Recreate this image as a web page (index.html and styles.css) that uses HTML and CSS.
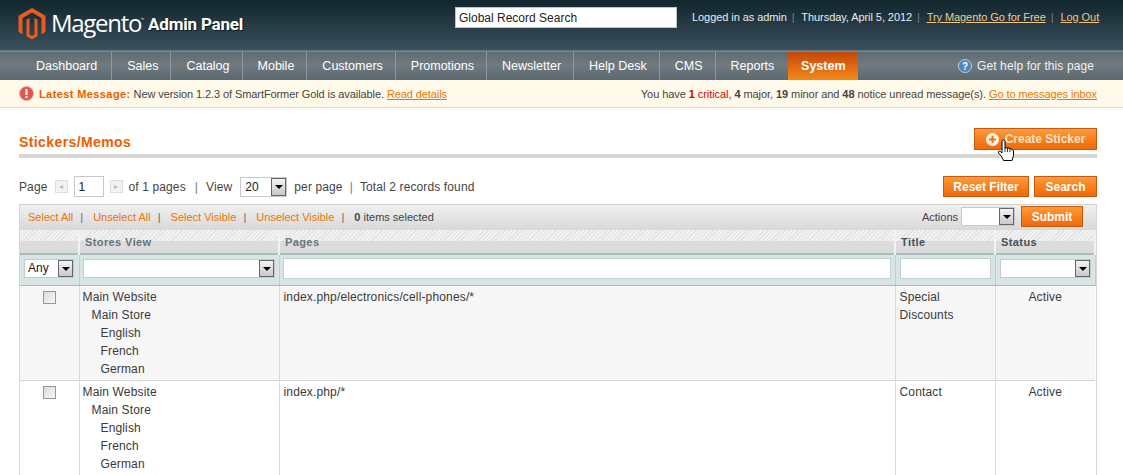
FILE: index.html
```html
<!DOCTYPE html>
<html lang="en">

<head>
    <meta charset="UTF-8">
    <meta name="viewport" content="width=device-width, initial-scale=1.0">
    <title>Stickers/Memos</title>
    <link rel="stylesheet" href="styles.css">
</head>

<body>
    <div class="header">
        <div class="logo">
            <svg class="logo-icon" width="28" height="32" viewBox="0 0 28 32">
                <path fill="#ea5b1d" d="M14 0 27.5 7.8V24L23.5 26.3V10.1L14 4.6 4.5 10.1V26.3L.5 24V7.8Z"/>
                <path fill="#ea5b1d" d="M14 8.5 19.5 11.7V28.2L14 31.5 8.500 28.200V11.700L11.500 10V26.500L14 28 16.500 26.500V10Z"/>
            </svg>
            <span class="logo-name">Magento<sup>™</sup></span>
            <span class="logo-sub">Admin Panel</span>
        </div>
        <input class="global-search" type="text" value="Global Record Search">
        <div class="user-info">
            <span>Logged in as admin</span><i>|</i>
            <span>Thursday, April 5, 2012</span><i>|</i>
            <a class="go-link" href="#">Try Magento Go for Free</a><i>|</i>
            <a class="logout" href="#">Log Out</a>
        </div>
    </div>

    <div class="nav">
        <ul class="nav-list">
            <li>Dashboard</li>
            <li>Sales</li>
            <li>Catalog</li>
            <li>Mobile</li>
            <li>Customers</li>
            <li>Promotions</li>
            <li>Newsletter</li>
            <li>Help Desk</li>
            <li>CMS</li>
            <li>Reports</li>
            <li class="active">System</li>
        </ul>
        <div class="help">
            <svg width="14" height="14" viewBox="0 0 14 14">
                <circle cx="7" cy="7" r="6.500" fill="#4f86b8" stroke="#b9cfe0"/>
                <text x="7" y="10.500" text-anchor="middle" font-size="10" font-weight="bold" fill="#fff" font-family="Liberation Sans, sans-serif">?</text>
            </svg>
            <span>Get help for this page</span>
        </div>
    </div>

    <div class="notice">
        <div class="notice-left">
            <svg width="15" height="15" viewBox="0 0 15 15">
                <circle cx="7.500" cy="7.500" r="7" fill="#e2574c" stroke="#f2a79f"/>
                <rect x="6.500" y="3" width="2" height="6" fill="#fff"/>
                <rect x="6.500" y="10" width="2" height="2" fill="#fff"/>
            </svg>
            <span><b class="latest">Latest Message:</b> New version 1.2.3 of SmartFormer Gold is available. <a href="#">Read details</a></span>
        </div>
        <div class="notice-right">
            You have <b class="critical">1</b> <span class="critical">critical</span>, <b>4</b> major, <b>19</b> minor and <b>48</b> notice unread message(s). <a href="#">Go to messages inbox</a>
        </div>
    </div>

    <div class="content">
        <div class="title-row">
            <h3>Stickers/Memos</h3>
            <button class="btn btn-create">
                <svg width="13" height="13" viewBox="0 0 13 13">
                    <circle cx="6.500" cy="6.500" r="6.500" fill="#fff2e2"/>
                    <rect x="3" y="5.500" width="7" height="2" fill="#e8731a"/>
                    <rect x="5.500" y="3" width="2" height="7" fill="#e8731a"/>
                </svg>
                Create Sticker
            </button>
        </div>

        <div class="pager-row">
            <div class="pager">
                <span>Page</span>
                <span class="page-arrow first">&#9666;</span>
                <input class="page-input" type="text" value="1">
                <span class="page-arrow">&#9656;</span>
                <span>of 1 pages</span>
                <i>|</i>
                <span>View</span>
                <div class="sel sel-view"><span class="sel-val">20</span><span class="sel-btn"></span></div>
                <span>per page</span>
                <i>|</i>
                <span>Total 2 records found</span>
            </div>
            <div class="pager-btns">
                <button class="btn btn-reset">Reset Filter</button>
                <button class="btn btn-search">Search</button>
            </div>
        </div>

        <div class="grid">
            <div class="massaction">
                <div class="mass-links">
                    <a href="#">Select All</a><i>|</i>
                    <a href="#">Unselect All</a><i>|</i>
                    <a href="#">Select Visible</a><i>|</i>
                    <a href="#">Unselect Visible</a><i>|</i>
                    <span><b>0</b> items selected</span>
                </div>
                <div class="mass-actions">
                    <span>Actions</span>
                    <div class="sel sel-actions"><span class="sel-val"></span><span class="sel-btn"></span></div>
                    <button class="btn btn-submit">Submit</button>
                </div>
            </div>

            <table class="data">
                <colgroup>
                    <col class="col-check">
                    <col class="col-stores">
                    <col class="col-pages">
                    <col class="col-title">
                    <col class="col-status">
                </colgroup>
                <thead>
                    <tr class="headings">
                        <th></th>
                        <th>Stores View</th>
                        <th>Pages</th>
                        <th>Title</th>
                        <th>Status</th>
                    </tr>
                    <tr class="filter">
                        <th><div class="sel sel-any"><span class="sel-val">Any</span><span class="sel-btn"></span></div></th>
                        <th><div class="sel"><span class="sel-val"></span><span class="sel-btn"></span></div></th>
                        <th><input type="text"></th>
                        <th><input type="text"></th>
                        <th><div class="sel"><span class="sel-val"></span><span class="sel-btn"></span></div></th>
                    </tr>
                </thead>
                <tbody>
                    <tr class="even">
                        <td class="check"><span class="checkbox"></span></td>
                        <td class="stores">
                            Main Website
                            <div class="store">Main Store</div>
                            <div class="view">English</div>
                            <div class="view">French</div>
                            <div class="view">German</div>
                        </td>
                        <td>index.php/electronics/cell-phones/*</td>
                        <td>Special Discounts</td>
                        <td class="status">Active</td>
                    </tr>
                    <tr>
                        <td class="check"><span class="checkbox"></span></td>
                        <td class="stores">
                            Main Website
                            <div class="store">Main Store</div>
                            <div class="view">English</div>
                            <div class="view">French</div>
                            <div class="view">German</div>
                        </td>
                        <td>index.php/*</td>
                        <td>Contact</td>
                        <td class="status">Active</td>
                    </tr>
                </tbody>
            </table>
        </div>
    </div>

    <!-- mouse pointer caught in the screenshot -->
    <svg class="cursor" width="18" height="23" viewBox="0 0 18 23">
        <path fill="#fff" stroke="#000" stroke-width="1" stroke-linejoin="round" d="M5.500 1.500C6.500.5 8 1 8 2.500V9L10 8.800 12 9.200 14 9.800 15.500 10.800 16.500 12V16.500L15 21.500H6.500L5 18 1.500 14C.8 12.800 1.800 11.500 3.200 12.300L5 14V2.500Z"/>
        <path fill="none" stroke="#000" stroke-width=".8" d="M8 9V13M10.500 9V13M13 9.500V13"/>
    </svg>
</body>

</html>
```

FILE: styles.css
```css
html {
    overflow: hidden;
}

body {
    font-family: "Liberation Sans", Arial, sans-serif;
    font-size: 12px;
    color: #2f2f2f;
    margin: 0;
    padding: 0;
    background-color: #fff;
}

i {
    font-style: normal;
}

/* header */
.header {
    height: 50px;
    display: flex;
    align-items: flex-start;
    background: linear-gradient(#11252d, #3a505c);
    border-bottom: 1px solid #5f7580;
}

.logo {
    width: 455px;
    display: flex;
    align-items: center;
    padding: 7px 0 0 18px;
    box-sizing: border-box;
    color: #fff;
}

.logo-icon {
    margin-right: 5px;
}

.logo-name {
    font-family: "Open Sans", sans-serif;
    font-size: 24px;
    letter-spacing: -1.3px;
    margin-right: 4px;
    position: relative;
    top: -1px;
}

.logo-name sup {
    font-size: 4px;
    vertical-align: 11px;
    line-height: 0;
    letter-spacing: 0;
}

.logo-sub {
    font-family: Roboto, sans-serif;
    font-weight: bold;
    font-size: 17px;
    letter-spacing: -.2px;
    text-shadow: 1px 1px 1px #0c1a20;
}

.global-search {
    width: 222px;
    height: 21px;
    margin: 7px 15px 0 0;
    padding: 0 3px;
    box-sizing: border-box;
    border: 1px solid #b9c6cc;
    font-family: inherit;
    font-size: 12px;
    color: #222;
}

.user-info {
    margin-top: 11px;
    font-size: 11px;
    letter-spacing: -.07px;
    color: #e6ecef;
    white-space: nowrap;
}

.user-info i {
    color: #6f858f;
    margin: 0 4px 0 5px;
}

.user-info a {
    text-decoration: underline;
}

.go-link {
    color: #f0c98a;
}

.logout {
    color: #f4c27c;
}

/* navigation */
.nav {
    height: 29px;
    display: flex;
    justify-content: space-between;
    background: linear-gradient(#5f6b72, #6f7a81 45%, #5c686f);
    color: #fff;
    font-size: 12.5px;
    border-top: 1px solid #7d8a91;
    box-sizing: border-box;
}

.nav-list {
    display: flex;
    list-style: none;
    margin: 0;
    padding: 0 0 0 21px;
}

.nav-list li {
    line-height: 28px;
    padding: 0 12px 0 15px;
    border-right: 1px solid #8d979d;
}

.nav-list li:first-child {
    padding-right: 14px;
}

.nav-list li:nth-last-child(2) {
    border-right: none;
    padding-right: 14px;
}

.nav-list .active {
    width: 70px;
    box-sizing: border-box;
    padding: 0;
    text-align: center;
    font-weight: bold;
    border-right: none;
    background: linear-gradient(#c2470a, #e2660f 50%, #f08a1c);
}

.help {
    display: flex;
    align-items: center;
    gap: 5px;
    padding-right: 29px;
    font-size: 12px;
    letter-spacing: .1px;
    color: #eef1f2;
}

/* message bar */
.notice {
    height: 28px;
    display: flex;
    justify-content: space-between;
    align-items: center;
    padding: 0 26px 0 19px;
    box-sizing: border-box;
    background-color: #fff9e9;
    border-bottom: 1px solid #e6e0cf;
    font-size: 11px;
    letter-spacing: -.09px;
    color: #444;
}

.notice-right {
    letter-spacing: -.07px;
}

.notice-left {
    display: flex;
    align-items: center;
    gap: 5px;
}

.notice a {
    color: #ea7601;
    text-decoration: underline;
}

.latest {
    color: #eb5e00;
    letter-spacing: .4px;
}

.critical {
    color: #d40707;
}

/* page */
.content {
    padding: 0 26px 0 19px;
}

.title-row {
    height: 50px;
    display: flex;
    justify-content: space-between;
    align-items: flex-start;
    box-sizing: border-box;
    padding-top: 20px;
    border-bottom: 4px solid #d6d6d6;
}

.title-row h3 {
    margin: 6px 0 0;
    font-size: 14px;
    line-height: 17px;
    letter-spacing: .4px;
    color: #eb5e00;
}

.btn {
    height: 22px;
    padding: 0;
    border: 1px solid #c85a0e;
    background: linear-gradient(#ff9a3c, #f57f1c 55%, #ee6a0c);
    color: #fff;
    font-family: inherit;
    font-size: 12px;
    font-weight: bold;
    cursor: pointer;
    box-sizing: border-box;
}

.btn-create {
    width: 123px;
    display: flex;
    align-items: center;
    justify-content: center;
    gap: 6px;
    color: #fde3c8;
}

.pager-row {
    height: 46px;
    display: flex;
    justify-content: space-between;
    align-items: flex-start;
    padding-top: 18px;
    box-sizing: border-box;
}

.pager {
    height: 21px;
    display: flex;
    align-items: center;
    color: #444;
    letter-spacing: .12px;
    white-space: nowrap;
}

.pager i {
    margin: 0 7px;
    color: #777;
}

.pager i:first-of-type {
    margin: 0 8px 0 9px;
}

.page-arrow {
    width: 13px;
    height: 13px;
    margin: 0 6px;
    box-sizing: border-box;
    border: 1px solid #ddd;
    background-color: #f2f2f2;
    color: #bbb;
    font-size: 8px;
    line-height: 11px;
    text-align: center;
}

.page-arrow.first {
    margin-left: 7px;
}

.page-input {
    width: 30px;
    height: 21px;
    margin: 0;
    padding: 0 4px;
    box-sizing: border-box;
    border: 1px solid #c9c9c9;
    font-family: inherit;
    font-size: 12px;
    color: #222;
}

.pager-btns {
    display: flex;
    gap: 5px;
}

.btn-reset {
    width: 86px;
    height: 21px;
}

.btn-search {
    width: 63px;
    height: 21px;
}

/* fake select box, the arrow button looks like the old windows one */
.sel {
    height: 19px;
    display: flex;
    align-items: stretch;
    box-sizing: border-box;
    border: 1px solid #c9c9c9;
    background-color: #fff;
    color: #222;
    font-weight: normal;
}

.sel-val {
    flex: 1;
    padding-left: 3px;
    line-height: 17px;
    text-align: left;
}

.sel-btn {
    width: 15px;
    margin: 0;
    box-sizing: border-box;
    border: 1px solid #666;
    background: linear-gradient(#f3f3f3, #c8c8c8);
    position: relative;
}

.sel-btn::after {
    content: "";
    position: absolute;
    left: 3px;
    top: 6px;
    border-left: 4px solid transparent;
    border-right: 4px solid transparent;
    border-top: 4px solid #000;
}

.sel-view {
    width: 47px;
    height: 20px;
    margin: 0 7px 0 8px;
}

.sel-view .sel-val {
    padding-left: 4px;
    line-height: 18px;
}

/* grid */
.grid {
    border: 1px solid #d6d6d6;
    border-width: 0 1px;
    height: 271px;
    overflow: hidden;
}

.massaction {
    height: 26px;
    display: flex;
    justify-content: space-between;
    align-items: center;
    padding: 0 13px 2px 8px;
    box-sizing: border-box;
    background: linear-gradient(#f0f0f0, #d8d8d8);
    border-top: 1px solid #cfcfcf;
    font-size: 11px;
    color: #444;
}

.massaction a {
    color: #ea7601;
    text-decoration: none;
}

.mass-links i {
    margin: 0 7px;
    color: #666;
}

.mass-actions {
    display: flex;
    align-items: center;
}

.mass-actions > span {
    margin-left: 1px;
}

.sel-actions {
    width: 54px;
    height: 19px;
    margin: 0 6px 0 3px;
}

.btn-submit {
    width: 62px;
    height: 21px;
}

.data {
    width: 100%;
    table-layout: fixed;
    border-collapse: collapse;
}

.col-check {
    width: 59px;
}

.col-stores {
    width: 200px;
}

.col-title {
    width: 100px;
}

.col-status {
    width: 100px;
}

.headings th {
    height: 24px;
    padding: 0 0 0 5px;
    box-sizing: border-box;
    text-align: left;
    font-size: 11px;
    letter-spacing: .4px;
    color: #67767e;
    background:
        repeating-linear-gradient(135deg, #e2e2e2 0 1px, #f1f1f1 1px 3px) top / 100% 11px no-repeat,
        #dcdcdc;
    border-right: 2px solid #f2f2f2;
}

.headings th:nth-child(4),
.headings th:nth-child(5) {
    color: #44525a;
}

.filter th {
    height: 31px;
    padding: 0 4px 2px;
    box-sizing: border-box;
    background-color: #d7e5e5;
    border-top: 2px solid #a9bcc0;
    border-right: 1px solid #bfd0d2;
    border-bottom: 1px solid #a9bcc0;
    vertical-align: middle;
}

.filter th:nth-child(2),
.filter th:nth-child(3) {
    padding-left: 3px;
}

.filter input {
    width: 100%;
    height: 21px;
    padding: 0 3px;
    box-sizing: border-box;
    border: 1px solid #c3d0d2;
    display: block;
}

.sel-any {
    width: 50px;
}

.data td {
    height: 95px;
    padding: 2px 4px;
    box-sizing: border-box;
    vertical-align: top;
    line-height: 18px;
    letter-spacing: .15px;
    border-right: 1px solid #d6dcdc;
    border-bottom: 1px solid #d6d6d6;
    color: #3a3a3a;
}

.data td:last-child {
    border-right: none;
}

.data .stores {
    padding-left: 3px;
}

.even td {
    background-color: #f6f6f6;
}

.check {
    text-align: center;
}

.checkbox {
    display: inline-block;
    width: 13px;
    height: 13px;
    margin-top: 3px;
    box-sizing: border-box;
    border: 1px solid #8f9aa0;
    background: linear-gradient(135deg, #dcdcdc, #f8f8f8);
}

.store {
    padding-left: 9px;
}

.view {
    padding-left: 18px;
}

.status {
    text-align: center;
}

.cursor {
    position: absolute;
    left: 997px;
    top: 139px;
}
```
